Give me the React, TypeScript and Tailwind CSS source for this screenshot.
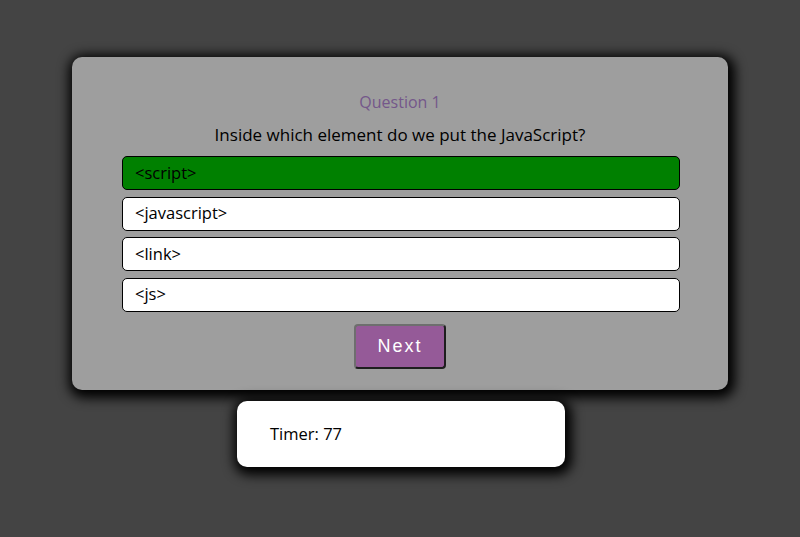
import React, { useState } from 'react';

const options = ['<script>', '<javascript>', '<link>', '<js>'];

export default function App() {
  const [selected, setSelected] = useState(0);

  return (
    <div className="min-h-screen w-full bg-[#444444] flex flex-col items-center pt-[57px] font-['Open_Sans',sans-serif]">
      <div className="w-[656px] h-[333px] rounded-[10px] bg-[#9e9e9e] shadow-[2px_3px_12px_5px_#000] pt-[33px] flex flex-col items-center">
        <h2 className="text-[16px] leading-6 text-[#74578a]">Question 1</h2>
        <p className="mt-[9px] text-[17px] leading-6 text-black">Inside which element do we put the JavaScript?</p>
        <div className="mt-[9px] w-[558px] ml-[2px] flex flex-col gap-[6.5px]">
          {options.map((opt, i) => (
            <button
              key={opt}
              onClick={() => setSelected(i)}
              className={`h-[34px] w-full rounded-[5px] border border-black pl-[12px] text-left text-[16.5px] text-black ${
                i === selected ? 'bg-[#008000]' : 'bg-white'
              }`}
            >
              {opt}
            </button>
          ))}
        </div>
        <button className="mt-[12px] h-[45px] w-[92px] rounded-[4px] border-2 border-t-[#6e6e6e] border-l-[#6e6e6e] border-b-[#1e1e1e] border-r-[#1e1e1e] bg-[#955a98] font-['Liberation_Sans',sans-serif] text-[18px] tracking-[2px] text-white">
          Next
        </button>
      </div>
      <div className="mt-[11px] ml-[2px] h-[66px] w-[328px] rounded-[10px] bg-white shadow-[2px_3px_12px_5px_#000] flex items-center pl-[33px]">
        <span className="text-[16.5px] text-black">Timer: 77</span>
      </div>
    </div>
  );
}
